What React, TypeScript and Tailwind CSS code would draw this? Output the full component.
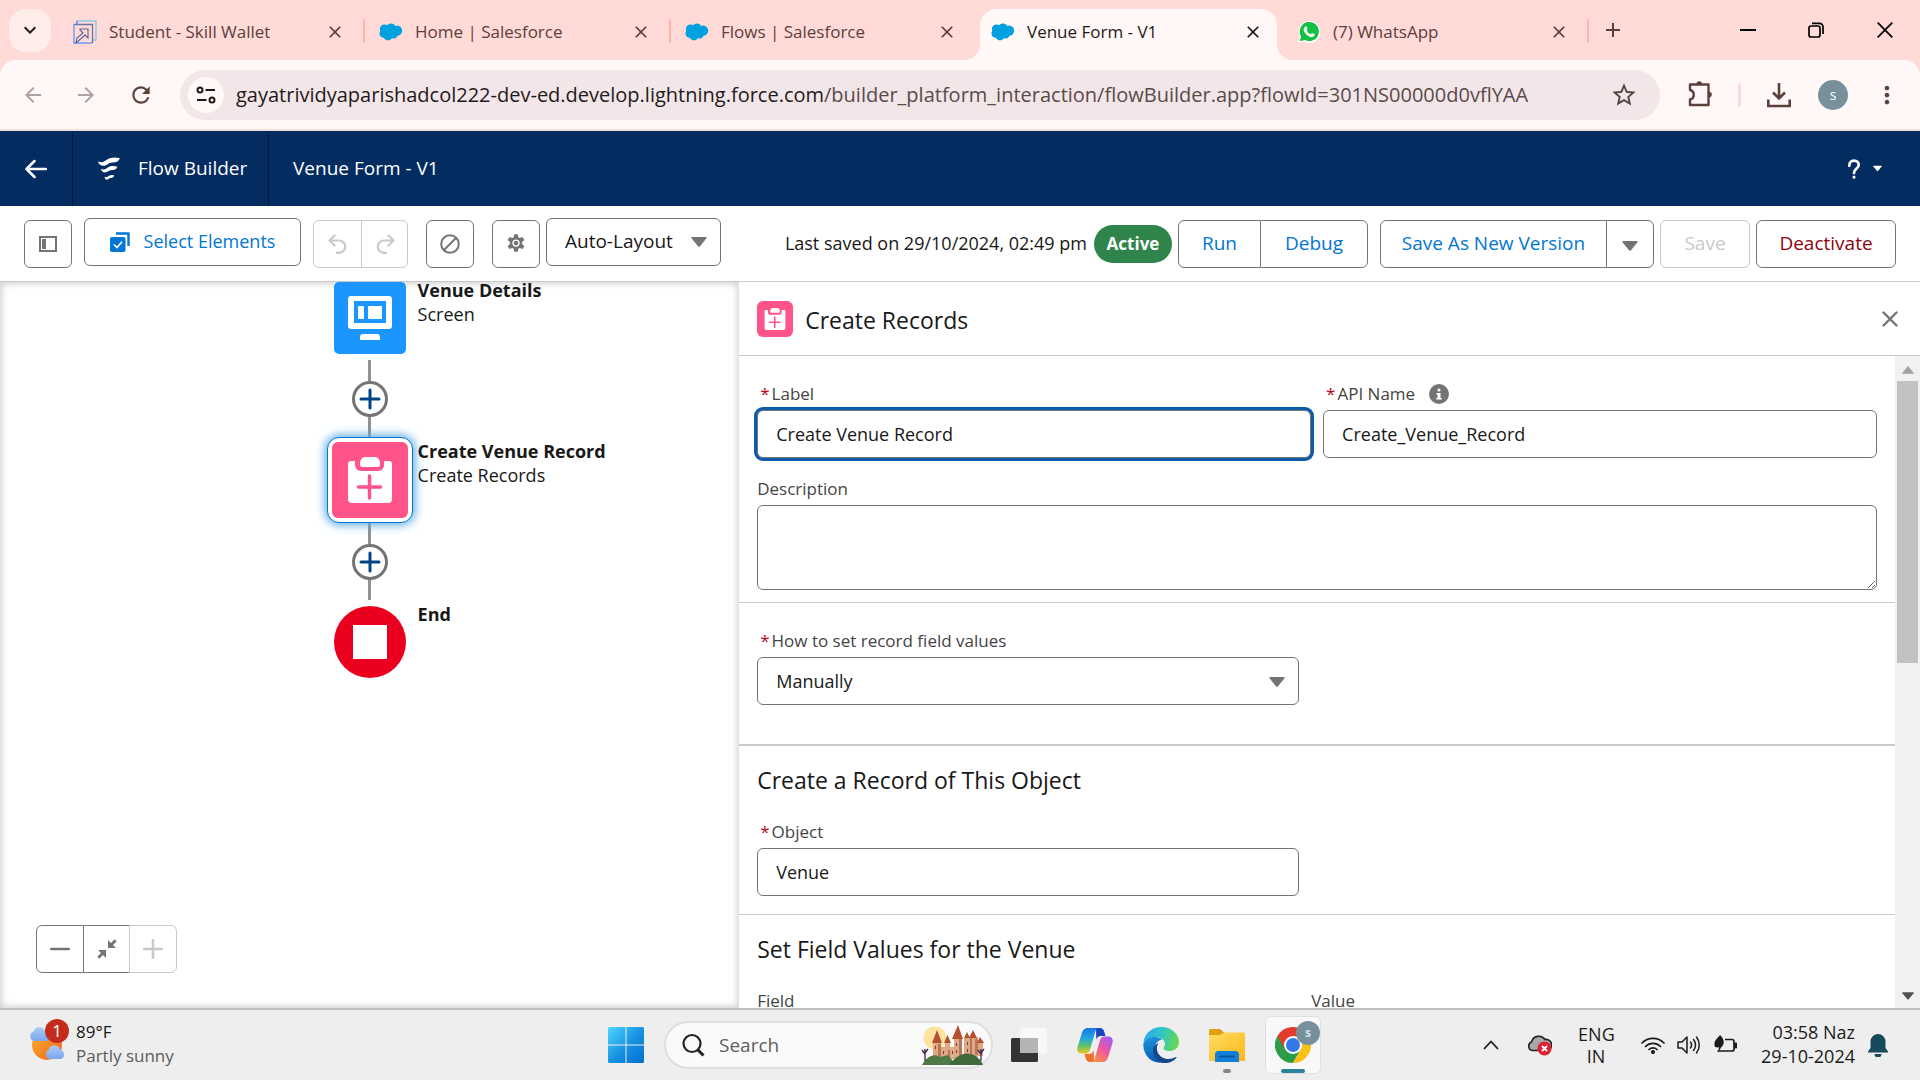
import React from "react";
import type { ReactNode } from "react";
import {
  MdArrowBack,
  MdArrowForward,
  MdRefresh,
  MdStarOutline,
  MdMoreVert,
  MdClose,
  MdAdd,
  MdKeyboardArrowDown,
} from "react-icons/md";

const iconButton =
  "flex size-12 items-center justify-center rounded-md border border-[#747474] bg-white text-[#747474]";
const textButton =
  "flex h-12 items-center justify-center border border-[#747474] bg-white text-[19px] text-[#0176d3]";
const fieldBox =
  "h-12 w-full rounded-md border border-[#747474] bg-white px-[18px] text-[18px] text-[#181818] outline-none";

function SalesforceCloud() {
  return (
    <svg viewBox="0 0 24 18" className="h-[18px] w-6" fill="#00a1e0">
      <circle cx="5.5" cy="6" r="4.6" />
      <circle cx="12" cy="5" r="4.6" />
      <circle cx="18" cy="7.6" r="5.2" />
      <circle cx="4.8" cy="10.4" r="4.3" />
      <circle cx="9" cy="12.8" r="4.6" />
      <circle cx="14.5" cy="11.4" r="4" />
    </svg>
  );
}

function SkillWalletIcon() {
  return (
    <svg viewBox="0 0 24 24" className="size-6" fill="none">
      <path d="M4 4V1h19v19h-3" stroke="#8bc8e8" strokeWidth="1.4" />
      <path d="M4 1v3" stroke="#6c8cf0" strokeWidth="1.4" />
      <path d="M1 4.5h18.5V23" stroke="#6a74a8" strokeWidth="1.3" />
      <path d="M1 4v19h18" stroke="#6c9cf0" strokeWidth="1.4" />
      <path d="M7 9h8v9l-3-3-9 8 1-5 6-5-3-3z" stroke="#5a6498" strokeWidth="1.1" />
    </svg>
  );
}

function WhatsAppIcon() {
  return (
    <svg viewBox="0 0 24 24" className="size-6">
      <path d="M1 23l1.6-6A11 11 0 1 1 7 21.6z" fill="#fff" />
      <path d="M2.8 21.3l1.3-4.8a9.6 9.6 0 1 1 3.7 3.5z" fill="#12c143" />
      <path
        d="M8.2 6.4c.5-.4 1.1-.3 1.4.3l.8 1.8c.1.4 0 .7-.8 1.7.8 1.9 2.3 3.3 4.2 4.1.9-1 1.2-1.3 1.7-1.1l1.900.9c.5.3.4 1-.1 1.7-1 1.3-2.4 1.7-4.3 1-3-1-5.1-3.2-6.1-5.8-.5-1.900 0-3.5 1.3-4.6z"
        fill="#fff"
      />
    </svg>
  );
}

function CaretDown({ className }: { className: string }) {
  return (
    <svg viewBox="0 0 16 10" className={className} fill="currentColor">
      <path d="M1.2 0h13.600c.9 0 1.2.7.7 1.3L8.8 9.4c-.4.6-1.2.6-1.6 0L.5 1.3C0 .7.3 0 1.2 0z" />
    </svg>
  );
}

function Tab({
  icon,
  title,
  active = false,
  divider = true,
}: {
  icon: ReactNode;
  title: string;
  active?: boolean;
  divider?: boolean;
}) {
  return (
    <div
      className={
        active
          ? "relative flex h-[51px] min-w-0 max-w-[306px] flex-1 items-center self-end pb-1.5 text-[#1f1a19]"
          : "relative flex h-[51px] min-w-0 max-w-[306px] flex-1 items-center self-end pb-1.5 text-[#5d403c]"
      }
    >
      {active && (
        <span className="absolute inset-y-0 left-[3px] right-1.5 rounded-t-2xl bg-[#fff8f6]">
          <span className="absolute -left-4 bottom-0 size-4 bg-[radial-gradient(circle_at_0_0,#ffdad6_16px,#fff8f6_16px)]" />
          <span className="absolute -right-4 bottom-0 size-4 bg-[radial-gradient(circle_at_100%_0,#ffdad6_16px,#fff8f6_16px)]" />
        </span>
      )}
      <button className="relative flex min-w-0 flex-1 items-center gap-3 pl-3.5 text-left">
        {icon}
        <span className="truncate text-[17px]">{title}</span>
      </button>
      <button aria-label={"Close " + title} className="relative mr-5 shrink-0">
        <MdClose className="size-5" />
      </button>
      {divider && <span className="absolute right-0 top-2.5 h-6 w-0.5 rounded bg-[#ffb4ab]" />}
    </div>
  );
}

function TabStrip() {
  return (
    <div className="flex h-[60px] items-center bg-[#ffdad6] pl-[9px]">
      <button
        aria-label="Search tabs"
        className="mr-2 flex h-[43px] w-[42px] shrink-0 items-center justify-center rounded-2xl bg-[#ffedea] text-[#1f1a19]"
      >
        <MdKeyboardArrowDown className="size-6" />
      </button>
      <div className="flex min-w-0 flex-1 self-stretch">
        <Tab icon={<SkillWalletIcon />} title="Student - Skill Wallet" />
        <Tab icon={<SalesforceCloud />} title="Home | Salesforce" />
        <Tab icon={<SalesforceCloud />} title="Flows | Salesforce" divider={false} />
        <Tab icon={<SalesforceCloud />} title="Venue Form - V1" active divider={false} />
        <Tab icon={<WhatsAppIcon />} title="(7) WhatsApp" />
        <button aria-label="New tab" className="ml-3 shrink-0 text-[#5d403c]">
          <MdAdd className="size-6" />
        </button>
      </div>
      <div className="flex shrink-0 text-black">
        <button aria-label="Minimise" className="flex w-[68px] justify-center">
          <svg viewBox="0 0 16 16" className="size-4" stroke="currentColor" strokeWidth="2">
            <path d="M0 8h16" />
          </svg>
        </button>
        <button aria-label="Restore" className="flex w-[68px] justify-center">
          <svg viewBox="0 0 16 16" className="size-4" fill="none" stroke="currentColor" strokeWidth="1.7">
            <rect x="1" y="4" width="11" height="11" rx="2" />
            <path d="M4 1.3h7.500a3.500 3.500 0 0 1 3.500 3.500V12" />
          </svg>
        </button>
        <button aria-label="Close window" className="flex w-[70px] justify-center">
          <svg viewBox="0 0 16 16" className="size-4" stroke="currentColor" strokeWidth="1.8">
            <path d="M.7.7l14.600 14.600M15.300.7L.7 15.300" />
          </svg>
        </button>
      </div>
    </div>
  );
}

function AddressBar() {
  return (
    <div className="bg-[#ffdad6]">
      <div className="flex h-[71px] items-center rounded-t-2xl border-b-2 border-[#f6dedb] bg-[#fff8f6] text-[#5d403c]">
        <button aria-label="Back" className="ml-[21px] text-[#b3a19f]">
          <MdArrowBack className="size-6" />
        </button>
        <button aria-label="Forward" className="ml-[29px] text-[#b3a19f]">
          <MdArrowForward className="size-6" />
        </button>
        <button aria-label="Reload" className="ml-[30px]">
          <MdRefresh className="size-[26px]" />
        </button>
        <div className="ml-[26px] flex h-[50px] min-w-0 flex-1 items-center rounded-full bg-[#f3e6e8] pl-2 pr-[22px]">
          <button
            aria-label="View site information"
            className="flex size-9 shrink-0 items-center justify-center rounded-full bg-[#fff8f6] text-[#1f1a19]"
          >
            <svg viewBox="0 0 20 20" className="size-5" fill="none" stroke="currentColor" strokeWidth="2">
              <circle cx="4" cy="5" r="2.5" />
              <path d="M9.5 5H19M1 15h9.5" />
              <circle cx="16" cy="15" r="2.5" />
            </svg>
          </button>
          <div className="ml-3 min-w-0 flex-1 truncate text-[20px] text-[#5a4a4b]">
            <span className="text-[#1f1a1b]">gayatrividyaparishadcol222-dev-ed.develop.lightning.force.com</span>
            /builder_platform_interaction/flowBuilder.app?flowId=301NS00000d0vflYAA
          </div>
          <button aria-label="Bookmark this tab" className="text-[#524344]">
            <MdStarOutline className="size-7" />
          </button>
        </div>
        <button aria-label="Extensions" className="mb-1 ml-[26px]">
          <svg viewBox="0 0 28 28" className="size-7" fill="none" stroke="currentColor" strokeWidth="2.4" strokeLinejoin="round">
            <path d="M4 5.500h18.500V26H4v-5.500c5-1 5-8.500 0-9.500z" />
            <path d="M10.500 5a2.800 2.800 0 0 1 5.600 0zM23 12.800a2.800 2.800 0 0 1 0 5.600z" fill="currentColor" stroke="none" />
          </svg>
        </button>
        <span className="ml-6 h-6 w-[3px] rounded bg-[#ffdad6]" />
        <button aria-label="Downloads" className="ml-[25px]">
          <svg viewBox="0 0 26 26" className="size-[26px]" fill="none" stroke="currentColor" strokeWidth="2.6">
            <path d="M13 1v15M7 10.500l6 6 6-6M2.300 17.500V24h21.400v-6.500" />
          </svg>
        </button>
        <button
          aria-label="Profile"
          className="ml-[26px] flex size-[30px] items-center justify-center rounded-full bg-[#78909c] text-[14px] text-white"
        >
          s
        </button>
        <button aria-label="Menu" className="ml-[25px] mr-[19px]">
          <MdMoreVert className="size-7" />
        </button>
      </div>
    </div>
  );
}

function AppHeader() {
  return (
    <header className="flex h-[75px] items-stretch bg-[#032d60] text-[19px] text-white">
      <button aria-label="Back to flows" className="flex w-[73px] items-center justify-center border-r border-[#021a3a]">
        <svg viewBox="0 0 22 20" className="h-5 w-[22px]" fill="none" stroke="currentColor" strokeWidth="2.5" strokeLinecap="round" strokeLinejoin="round">
          <path d="M1.500 10H21M9.500 2l-8 8 8 8" />
        </svg>
      </button>
      <div className="flex w-[196px] items-center border-r border-[#021a3a] pl-6">
        <svg viewBox="0 0 24 24" className="size-6" fill="currentColor">
          <path d="M1 4.500c3.500 1.600 6 .3 8.500-1.500C13.500.2 18 .2 23 1.200c-1.500 3.300-4 4.300-7.500 4.300-4 0-5.500 3.300-9 3.300C3.500 8.800 1.500 7 1 4.500z" />
          <path d="M4 11.800c2.500 1.200 4.500.4 6.300-1C13 8.800 16.500 8.800 20.500 9.700c-1.200 2.600-3.200 3.400-5.800 3.400-3 0-4 2.500-6.700 2.500-2.300 0-3.600-1.500-4-3.800z" />
          <path d="M7.500 19.800c1.700.9 3 .3 4.200-.7 1.600-1.200 3.300-1.200 5.600-.7-.8 2-2 2.700-3.700 2.700-1.600 0-2.100 1.700-3.700 1.700-1.300 0-2.200-1.200-2.400-3z" />
        </svg>
        <span className="ml-[17px]">Flow Builder</span>
      </div>
      <h1 className="flex flex-1 items-center pl-6">Venue Form - V1</h1>
      <button aria-label="Help" className="flex items-center gap-3 pr-[38px]">
        <svg viewBox="0 0 14 22" className="h-5 w-3.5" fill="none" stroke="currentColor" strokeWidth="3">
          <path d="M1.800 7.500C1.800 3.500 4 1.800 7 1.800s5.200 2 5.200 4.700C12.200 10.500 7 10.500 7 15.500" strokeLinecap="round" />
          <path d="M7 18.500v3" />
        </svg>
        <CaretDown className="h-[7px] w-[9px]" />
      </button>
    </header>
  );
}

function FlowToolbar() {
  return (
    <div className="flex h-[76px] shrink-0 items-center border-b border-[#c9c9c9] bg-white px-6">
      <button aria-label="Toggle toolbox" className={iconButton}>
        <svg viewBox="0 0 18 16" className="h-4 w-[18px]" fill="none" stroke="currentColor" strokeWidth="2">
          <rect x="1" y="1" width="16" height="14" />
          <path d="M3 3h4v10H3z" fill="currentColor" stroke="none" />
        </svg>
      </button>
      <button className="mb-1 ml-3 flex h-12 w-[217px] items-center justify-center gap-3.5 rounded-md border border-[#747474] text-[18px] text-[#0176d3]">
        <svg viewBox="0 0 20 20" className="size-5" fill="none">
          <path d="M6 1.500h12.500V14" stroke="#0176d3" strokeWidth="2.4" strokeLinejoin="round" />
          <rect x="0" y="5" width="15.500" height="15" rx="2" fill="#0176d3" />
          <path d="M4 12.500l3 3 5-5.800" stroke="#fff" strokeWidth="1.7" />
        </svg>
        Select Elements
      </button>
      <div className="ml-3 flex h-12 rounded-md border border-[#c9c9c9] text-[#c9c9c9]">
        <button aria-label="Undo" disabled className="flex w-12 items-center justify-center border-r border-[#c9c9c9]">
          <svg viewBox="0 0 20 20" className="size-5" fill="none" stroke="currentColor" strokeWidth="2.2" strokeLinecap="round">
            <path d="M6.500 1.500l-5 5 5 5M2 6.500h9a6.200 6.200 0 0 1 0 12.400H9" />
          </svg>
        </button>
        <button aria-label="Redo" disabled className="flex w-[45px] items-center justify-center">
          <svg viewBox="0 0 20 20" className="size-5" fill="none" stroke="currentColor" strokeWidth="2.2" strokeLinecap="round">
            <path d="M13.500 1.500l5 5-5 5M18 6.500H9a6.200 6.200 0 0 0 0 12.400h2" />
          </svg>
        </button>
      </div>
      <button aria-label="Show errors" className={iconButton + " ml-[18px]"}>
        <svg viewBox="0 0 20 20" className="size-5" fill="none" stroke="currentColor" strokeWidth="2">
          <circle cx="10" cy="10" r="8.8" />
          <path d="M16 4L4 16" />
        </svg>
      </button>
      <button aria-label="View properties" className={iconButton + " ml-[18px]"}>
        <svg viewBox="0 0 20 20" className="size-5" fill="currentColor">
          <path
            fillRule="evenodd"
            d="M8.2.3h3.600l.6 3 1.200.7 2.900-1 1.800 3.100-2.300 2v1.800l2.300 2-1.800 3.100-2.900-1-1.200.7-.6 3H8.200l-.6-3-1.200-.7-2.900 1-1.800-3.100 2.300-2V8.100l-2.300-2L3.500 3l2.900 1 1.200-.7zM10 5.400a3.700 3.700 0 1 0 0 7.400 3.700 3.700 0 0 0 0-7.400z"
          />
          <circle cx="10" cy="9.100" r="2.300" />
        </svg>
      </button>
      <div className="relative mb-1 ml-1.5 w-[175px]">
        <select
          aria-label="Layout mode"
          className="h-12 w-full appearance-none rounded-md border border-[#747474] bg-white pl-[18px] text-[19px] text-[#181818]"
        >
          <option>Auto-Layout</option>
        </select>
        <CaretDown className="pointer-events-none absolute right-3.5 top-[19px] h-2.5 w-4 text-[#747474]" />
      </div>
      <div className="ml-auto flex items-center text-[19px] text-[#181818]">
        <span className="whitespace-nowrap text-[18px]">Last saved on 29/10/2024, 02:49 pm</span>
        <span className="ml-[7px] flex h-[38px] w-[78px] items-center justify-center rounded-full bg-[#2e844a] text-[17px] font-bold text-white">
          Active
        </span>
        <button className={textButton + " ml-1.5 w-[83px] rounded-l-md"}>Run</button>
        <button className={textButton + " -ml-px w-[108px] rounded-r-md"}>Debug</button>
        <button className={textButton + " ml-3 w-[227px] rounded-l-md"}>Save As New Version</button>
        <button aria-label="More save options" className={textButton + " -ml-px w-12 rounded-r-md"}>
          <CaretDown className="mt-1 h-2.5 w-4 text-[#747474]" />
        </button>
        <button
          disabled
          className="ml-1.5 flex h-12 w-[90px] items-center justify-center rounded-md border border-[#c9c9c9] text-[#c9c9c9]"
        >
          Save
        </button>
        <button className="ml-1.5 flex h-12 w-[140px] items-center justify-center rounded-md border border-[#747474] text-[#8e030f]">
          Deactivate
        </button>
      </div>
    </div>
  );
}

function ClipboardPlus({ className }: { className: string }) {
  return (
    <svg viewBox="0 0 76 76" className={className}>
      <rect width="76" height="76" fill="#ff538a" />
      <path d="M19 19h38a3 3 0 0 1 3 3v35a4 4 0 0 1-4 4H20a4 4 0 0 1-4-4V22a3 3 0 0 1 3-3z" fill="#fff" />
      <path d="M23 15h29v8a6 6 0 0 1-6 6H29a6 6 0 0 1-6-6z" fill="#ff538a" />
      <path d="M33 15h10c3 0 5 3 5 6v1.500a2.500 2.500 0 0 1-2.500 2.500h-15A2.500 2.500 0 0 1 28 22.500V21c0-3 2-6 5-6z" fill="#fff" />
      <path d="M37.500 34v22M26.500 45h22" stroke="#ff538a" strokeWidth="3.4" strokeLinecap="round" />
    </svg>
  );
}

function Connector() {
  return (
    <div className="flex flex-col items-center">
      <span className="h-[21px] w-[3px] bg-[#919191]" />
      <button
        aria-label="Add element"
        className="flex size-9 items-center justify-center rounded-full border-3 border-[#747474] bg-white"
      >
        <svg viewBox="0 0 22 22" className="size-[22px]" stroke="#014486" strokeWidth="3" strokeLinecap="round">
          <path d="M11 2v18M2 11h18" />
        </svg>
      </button>
      <span className="h-5 w-[3px] bg-[#919191]" />
    </div>
  );
}

function FlowCanvas() {
  return (
    <section
      aria-label="Flow canvas"
      className="relative w-[38.5%] shrink-0 overflow-hidden bg-white shadow-[inset_0_0_6px_2px_rgba(0,0,0,0.18)]"
    >
      <div className="flex flex-col items-center">
        <div className="relative pb-1.5">
          <svg viewBox="0 0 72 72" className="size-[72px]">
            <rect width="72" height="72" rx="5" fill="#1b96ff" />
            <path
              fillRule="evenodd"
              d="M17 14h38a3 3 0 0 1 3 3v27a3 3 0 0 1-3 3H17a3 3 0 0 1-3-3V17a3 3 0 0 1 3-3zm3 5v22h32V19z"
              fill="#fff"
            />
            <rect x="24" y="24" width="6" height="13" rx="1" fill="#fff" />
            <rect x="34" y="24" width="14" height="13" rx="1" fill="#fff" />
            <path d="M29 52h14a3 3 0 0 1 3 3v3H26v-3a3 3 0 0 1 3-3z" fill="#fff" />
          </svg>
          <div className="absolute left-full top-0 ml-3 whitespace-nowrap text-[18px] leading-6 text-[#181818]">
            <div className="-mt-1 font-bold">Venue Details</div>
            <div>Screen</div>
          </div>
        </div>
        <Connector />
        <div className="relative">
          <div className="rounded-xl border border-[#0176d3] bg-white p-1 shadow-[0_0_10px_2px_#5aabea]">
            <ClipboardPlus className="size-[76px] rounded-md" />
          </div>
          <div className="absolute left-full top-0 ml-[5px] whitespace-nowrap text-[18px] leading-6 text-[#181818]">
            <div className="mt-0.5 font-bold">Create Venue Record</div>
            <div>Create Records</div>
          </div>
        </div>
        <Connector />
        <div className="relative mt-1.5">
          <div className="flex size-[72px] items-center justify-center rounded-full bg-[#ea001e]">
            <span className="size-[34px] bg-white" />
          </div>
          <div className="absolute left-full top-0 ml-3 whitespace-nowrap text-[18px] leading-6 text-[#181818]">
            <div className="-mt-1 font-bold">End</div>
          </div>
        </div>
      </div>
      <div className="absolute bottom-[35px] left-9 flex h-12">
        <button aria-label="Zoom out" className="flex w-12 items-center justify-center rounded-l-md border border-[#747474] text-[#747474]">
          <svg viewBox="0 0 20 20" className="size-5" stroke="currentColor" strokeWidth="2.6" strokeLinecap="round">
            <path d="M1.300 10h17.400" />
          </svg>
        </button>
        <button aria-label="Zoom to fit" className="flex w-[45px] items-center justify-center border-y border-[#747474] text-[#747474]">
          <svg viewBox="0 0 20 20" className="size-5" fill="currentColor">
            <path d="M11 1v8h8l-3-3 3.700-3.700-2-2L14 4z" />
            <path d="M9 19v-8H1l3 3L.3 17.700l2 2L6 16z" />
          </svg>
        </button>
        <button aria-label="Zoom in" disabled className="flex w-12 items-center justify-center rounded-r-md border border-[#c9c9c9] text-[#c9c9c9]">
          <svg viewBox="0 0 20 20" className="size-5" stroke="currentColor" strokeWidth="2.6" strokeLinecap="round">
            <path d="M1.300 10h17.400M10 1.300v17.400" />
          </svg>
        </button>
      </div>
    </section>
  );
}

function FieldLabel({ htmlFor, required = false, children }: { htmlFor?: string; required?: boolean; children: ReactNode }) {
  return (
    <label htmlFor={htmlFor} className="flex h-6 items-center text-[17px] text-[#444444]">
      {required && (
        <abbr title="required" className="mr-0.5 pl-[3px] text-[#ba0517] no-underline">
          *
        </abbr>
      )}
      {children}
    </label>
  );
}

function PropertyPanel() {
  return (
    <section aria-label="Create Records" className="flex min-w-0 flex-1 flex-col bg-white">
      <div className="flex h-[74px] shrink-0 items-center border-b border-[#c9c9c9] pl-[18px] pr-[22px]">
        <ClipboardPlus className="size-9 rounded-md" />
        <h2 className="ml-3 mt-1 text-[23px] text-[#181818]">Create Records</h2>
        <button aria-label="Close panel" className="ml-auto text-[#747474]">
          <svg viewBox="0 0 16 16" className="size-4" stroke="currentColor" strokeWidth="2.4" strokeLinecap="round">
            <path d="M1.500 1.500l13 13M14.500 1.500l-13 13" />
          </svg>
        </button>
      </div>
      <div className="flex min-h-0 flex-1">
        <div className="min-w-0 flex-1 overflow-hidden">
          <div className="border-b border-[#c9c9c9] px-[18px] pb-3 pt-[26px]">
            <div className="grid grid-cols-2 gap-3">
              <div>
                <FieldLabel htmlFor="label" required>Label</FieldLabel>
                <input
                  id="label"
                  defaultValue="Create Venue Record"
                  className={fieldBox + " mt-1 shadow-[0_0_0_3px_#0b5cab]"}
                />
              </div>
              <div>
                <FieldLabel htmlFor="api-name" required>
                  API Name
                  <svg viewBox="0 0 20 20" className="ml-3.5 size-5">
                    <circle cx="10" cy="10" r="10" fill="#747474" />
                    <rect x="8.5" y="4.5" width="3" height="3" rx="1.5" fill="#fff" />
                    <path d="M7.500 9h4v5h1.200v1.500H7.300V14h1.200v-3.500h-1z" fill="#fff" />
                  </svg>
                </FieldLabel>
                <input id="api-name" defaultValue="Create_Venue_Record" className={fieldBox + " mt-1"} />
              </div>
            </div>
            <div className="mt-[19px]">
              <FieldLabel htmlFor="description">Description</FieldLabel>
              <textarea
                id="description"
                className="mt-1 block h-[85px] w-full resize rounded-md border border-[#747474] bg-white p-3 text-[18px]"
              />
            </div>
          </div>
          <div className="border-b-2 border-[#c9c9c9] px-[18px] pb-[39px] pt-[26px]">
            <FieldLabel htmlFor="set-values" required>How to set record field values</FieldLabel>
            <div className="relative mt-1 w-[542px] max-w-full">
              <select id="set-values" className={fieldBox + " appearance-none"}>
                <option>Manually</option>
              </select>
              <CaretDown className="pointer-events-none absolute right-3.5 top-5 h-2.5 w-4 text-[#747474]" />
            </div>
          </div>
          <div className="border-b border-[#c9c9c9] px-[18px] pb-[18px] pt-4">
            <h3 className="text-[23px] leading-9 text-[#181818]">Create a Record of This Object</h3>
            <div className="mt-[22px]">
              <FieldLabel htmlFor="object" required>Object</FieldLabel>
              <div className="mt-1 w-[542px] max-w-full">
                <input id="object" defaultValue="Venue" className={fieldBox} />
              </div>
            </div>
          </div>
          <div className="px-[18px] pt-4">
            <h3 className="text-[23px] leading-9 text-[#181818]">Set Field Values for the Venue</h3>
            <div className="mt-[22px] grid grid-cols-[554px_1fr]">
              <FieldLabel>Field</FieldLabel>
              <FieldLabel>Value</FieldLabel>
            </div>
          </div>
        </div>
        <div className="flex w-[25px] shrink-0 flex-col items-center bg-[#f1f1f1] pb-2 pt-2.5">
          <CaretDown className="h-2 w-3 rotate-180 text-[#a3a3a3]" />
          <span className="mt-[7px] h-[282px] w-[21px] bg-[#c1c1c1]" />
          <CaretDown className="mt-auto h-2 w-3 text-[#505050]" />
        </div>
      </div>
    </section>
  );
}

function CastleArt() {
  return (
    <svg viewBox="0 0 64 40" className="h-10 w-16">
      <circle cx="14" cy="13" r="11.5" fill="#ffe1a0" />
      <path d="M12 17h8v16h-8zM20 22h14v12H20zM33 13h8v20h-8zM43 12h14v20H43zM24 17h5v8h-5zM57 17h5v14h-5z" fill="#dfa987" />
      <path d="M17 19h3v14h-3zM38 14h3v18h-3zM49 13h2v18h-2zM27 25h2v8h-2zM54 14h3v16h-3z" fill="#b8765a" />
      <path d="M14 21h1v3h-1zM22 26h1v3h-1zM31 26h1v3h-1zM35 18h1v3h-1zM46 17h1v3h-1zM46 24h1v3h-1zM35 25h1v3h-1z" fill="#7a3a2c" />
      <path d="M11 18l5-13 5 13zM31 14l6-14 5 14zM23 18l3.500-8 3.500 8zM43 13l3-6 3 6zM48 13l4-8 4 8zM56 18l3-6 4 6z" fill="#b4502f" />
      <path d="M1 40c5-9 12-12 18-8l8-2 8 10z" fill="#4f7a45" />
      <path d="M28 40c7-9 14-13 22-11 6 2 10 6 12 11z" fill="#3f6a3c" />
      <path d="M4 36V24M4 29l-3-4M4 28l3-4M60 36V24M60 29l-3-4M60 28l3-4" stroke="#3b2450" strokeWidth="1.3" />
    </svg>
  );
}

function WeatherIcon() {
  return (
    <svg viewBox="0 0 42 44" className="h-11 w-[42px]">
      <defs>
        <linearGradient id="sun" x1="0" y1="0" x2="1" y2="1">
          <stop offset="0" stopColor="#f9b22c" />
          <stop offset="1" stopColor="#f0641e" />
        </linearGradient>
        <linearGradient id="cloud" x1="0" y1="0" x2="0" y2="1">
          <stop offset="0" stopColor="#a9cdf8" />
          <stop offset="1" stopColor="#7ba4ee" />
        </linearGradient>
      </defs>
      <circle cx="18" cy="26" r="15" fill="url(#sun)" />
      <path d="M5 22a5 5 0 0 1-.5-9.500 6 6 0 0 1 11.500 0A5 5 0 0 1 19 22z" fill="url(#cloud)" />
      <path d="M20 40a5 5 0 0 1-.5-9 6 6 0 0 1 11.500-.5A5 5 0 0 1 32 40z" fill="url(#cloud)" />
      <circle cx="28" cy="12" r="12" fill="#c42b1c" />
    </svg>
  );
}

function StartIcon() {
  return (
    <svg viewBox="0 0 36 36" className="size-9">
      <defs>
        <linearGradient id="win" x1="0" y1="0" x2="1" y2="1">
          <stop offset="0" stopColor="#4fd6ff" />
          <stop offset=".55" stopColor="#1590e0" />
          <stop offset="1" stopColor="#0070d0" />
        </linearGradient>
      </defs>
      <path d="M1.500 0H17.500v17.500H0V1.500A1.500 1.500 0 0 1 1.500 0zM18.500 0h16A1.500 1.500 0 0 1 36 1.500v16H18.500zM0 18.500h17.500V36h-16A1.500 1.500 0 0 1 0 34.500zM18.500 18.500H36v16a1.500 1.500 0 0 1-1.500 1.500h-16z" fill="url(#win)" />
    </svg>
  );
}

function CopilotIcon() {
  return (
    <svg viewBox="0 0 36 36" className="size-9">
      <defs>
        <linearGradient id="cpl" x1="0" y1="0" x2="0" y2="1">
          <stop offset="0" stopColor="#1676e4" />
          <stop offset=".4" stopColor="#20a6e0" />
          <stop offset=".7" stopColor="#5cc26a" />
          <stop offset="1" stopColor="#f0c81e" />
        </linearGradient>
        <linearGradient id="cpr" x1="0.8" y1="0" x2="0.2" y2="1">
          <stop offset="0" stopColor="#a45cf0" />
          <stop offset=".5" stopColor="#f0589a" />
          <stop offset="1" stopColor="#fb9440" />
        </linearGradient>
      </defs>
      <path d="M19 1h4c2 0 3.500 1.400 4.200 3.500L28.500 9H24c-2.500 0-4 1.500-4.700 3.700z" fill="#1a44c0" />
      <path d="M10.500 1H22c-2 0-3.200 1.500-3.900 4l-5 17.500c-.8 2.500-2.300 4-4.800 4H5c-4 0-5.500-3-4.500-6.500L5 5.500C6 2.500 8 1 10.500 1z" fill="url(#cpl)" />
      <path d="M17 35h-4c-2 0-3.500-1.400-4.200-3.500L7.500 27H12c2.500 0 4-1.500 4.700-3.700z" fill="#f0702a" />
      <path d="M25.500 35H14c2 0 3.200-1.500 3.900-4l5-17.500c.8-2.500 2.300-4 4.800-4H31c4 0 5.500 3 4.500 6.500L31 30.500c-1 3-3 4.500-5.500 4.500z" fill="url(#cpr)" />
    </svg>
  );
}

function EdgeIcon() {
  return (
    <svg viewBox="0 0 36 36" className="size-9">
      <defs>
        <linearGradient id="edgeTop" x1="0" y1="0.3" x2="1" y2="0.5">
          <stop offset="0" stopColor="#2aa8e8" />
          <stop offset=".5" stopColor="#30c6c8" />
          <stop offset="1" stopColor="#6ad84c" />
        </linearGradient>
        <linearGradient id="edgeLow" x1="0" y1="0" x2="0.3" y2="1">
          <stop offset="0" stopColor="#1c98e0" />
          <stop offset="1" stopColor="#0c5cb4" />
        </linearGradient>
      </defs>
      <path d="M.5 15C2 6 9 0 18.500 0 29 0 36 7.500 36 15c0 5.500-4 9-9 9-4 0-6.500-1.300-6.500-2.800 0-1 1.500-1.700 1.500-4.200 0-4-4-7-9.500-7C7 10 3 12 .5 15z" fill="url(#edgeTop)" />
      <path d="M.2 17C1.500 12.500 6 10 12 10c3 0 5.500 1 7.300 2.500C15 13 11.500 17 11.500 22c0 7 6 12 12 13-9 3-23-1.500-23.300-18z" fill="url(#edgeLow)" />
      <path d="M15.500 16c-4.500 7 1 16 10 16 3 0 5-.7 7.300-2 .5-.3 1 .2.700.7C30.500 34.500 26 36 22 36c-7 0-12-6-12-13 0-3 2-5.600 5.500-7z" fill="#14488c" />
    </svg>
  );
}

function ExplorerIcon() {
  return (
    <svg viewBox="0 0 36 36" className="size-9">
      <defs>
        <linearGradient id="folder" x1="0" y1="0" x2="1" y2="1">
          <stop offset="0" stopColor="#ffdc64" />
          <stop offset="1" stopColor="#fbb917" />
        </linearGradient>
      </defs>
      <path d="M0 3.500A1.500 1.500 0 0 1 1.500 2H11l4 3.500V12H0z" fill="#dfa010" />
      <path d="M0 8h11l4-2.500h20a1 1 0 0 1 1 1V34H0z" fill="url(#folder)" />
      <path d="M6 35V27.500A3.500 3.500 0 0 1 9.500 24h17a3.500 3.500 0 0 1 3.500 3.500V35z" fill="#1280d8" />
      <path d="M11 29.500h14" stroke="#0a569c" strokeWidth="1.8" strokeLinecap="round" />
    </svg>
  );
}

function ChromeIcon() {
  return (
    <svg viewBox="0 0 36 36" className="size-9">
      <path d="M2.400 9A18 18 0 0 0 18 36l7.800-13.500L18 18z" fill="#2b9c47" />
      <path d="M18 9h15.600A18 18 0 0 1 18 36l7.800-13.500z" fill="#fbc116" />
      <path d="M2.400 9A18 18 0 0 1 33.600 9H18l-7.800 13.500z" fill="#e33b2e" />
      <circle cx="18" cy="18" r="9" fill="#fff" />
      <circle cx="18" cy="18" r="7" fill="#3478e8" />
    </svg>
  );
}

function Taskbar() {
  return (
    <footer className="relative flex h-[72px] shrink-0 items-center justify-between border-t-2 border-[#bdbdbd] bg-[#eeeeee] text-[17px] text-[#1b1b1b]">
      <button className="ml-[29px] flex items-center text-left">
        <span className="relative -mt-2">
          <WeatherIcon />
          <span className="absolute left-4 top-0 w-6 text-center leading-6 text-white">1</span>
        </span>
        <span className="mb-0.5 ml-[5px] leading-6">
          <span className="block">89°F</span>
          <span className="block text-[#5c5c5c]">Partly sunny</span>
        </span>
      </button>
      <div className="absolute left-1/2 flex h-full -translate-x-[352px] items-center">
        <button aria-label="Start"><StartIcon /></button>
        <div className="ml-5 flex h-12 w-[329px] items-center rounded-full border-2 border-[#dedede] bg-[#fafafa] pl-[15px] pr-1.5">
          <svg viewBox="0 0 24 24" className="size-6 shrink-0" fill="none" stroke="#222" strokeWidth="2.2">
            <circle cx="11" cy="10.5" r="8.5" />
            <path d="M17 17l5.500 5.500" strokeWidth="3" />
          </svg>
          <input
            aria-label="Search"
            placeholder="Search"
            className="ml-3.5 min-w-0 flex-1 bg-transparent text-[19px] outline-none placeholder:text-[#5f5f5f]"
          />
          <CastleArt />
        </div>
        <button aria-label="Task view" className="ml-[18px]">
          <svg viewBox="0 0 36 36" className="size-9">
            <rect x="0" y="11" width="27" height="24" rx="1.5" fill="#333" />
            <rect x="9" y="1" width="27" height="25" rx="1.5" fill="#f8f8f8" />
            <rect x="9" y="11" width="18" height="15" fill="#b4b4b4" />
          </svg>
        </button>
        <button aria-label="Copilot" className="ml-[30px]"><CopilotIcon /></button>
        <button aria-label="Microsoft Edge" className="ml-[30px]"><EdgeIcon /></button>
        <button aria-label="File Explorer" className="relative ml-[30px]">
          <ExplorerIcon />
          <span className="absolute -bottom-2.5 left-3.5 h-1 w-2 rounded-full bg-[#858585]" />
        </button>
        <button
          aria-label="Google Chrome"
          className="relative ml-5 flex h-[58px] w-14 items-center justify-center rounded-md border border-[#e0e0e0] bg-[#f8f8f8]"
        >
          <ChromeIcon />
          <span className="absolute right-0 top-1 flex size-6 items-center justify-center rounded-full bg-[#78909c] text-[12px] font-bold text-[#d5e0e5]">
            s
          </span>
          <span className="absolute bottom-0 h-1 w-6 rounded-full bg-[#2a8598]" />
        </button>
      </div>
      <div className="flex items-center pr-8 text-[18px]">
        <button aria-label="Show hidden icons">
          <svg viewBox="0 0 16 10" className="h-2.5 w-4" fill="none" stroke="currentColor" strokeWidth="1.8">
            <path d="M1 9l7-7.500L15 9" />
          </svg>
        </button>
        <button aria-label="Cloud sync error" className="ml-7">
          <svg viewBox="0 0 25 22" className="h-[22px] w-[25px]">
            <path d="M5 16.500A4.500 4.500 0 0 1 4.500 8 7.500 7.500 0 0 1 18 5.500 5.500 5.500 0 0 1 20 16.500z" fill="#a8a8a8" stroke="#222" strokeWidth="1.6" />
            <circle cx="17.5" cy="14.5" r="7" fill="#dc2430" />
            <path d="M15 12l5 5M20 12l-5 5" stroke="#fff" strokeWidth="1.8" />
          </svg>
        </button>
        <button className="ml-[26px] w-9 text-center leading-[22px]">
          ENG
          <br />
          IN
        </button>
        <button aria-label="Network, volume and battery" className="ml-[27px] flex items-center gap-3">
          <svg viewBox="0 0 24 18" className="h-[18px] w-6" fill="none" stroke="currentColor" strokeWidth="1.7" strokeLinecap="round">
            <path d="M1 7a15.500 15.500 0 0 1 22 0M4.500 10.500a10.500 10.500 0 0 1 15 0M8 13.500a5.800 5.800 0 0 1 8 0" />
            <circle cx="12" cy="16" r="1.2" fill="currentColor" />
          </svg>
          <svg viewBox="0 0 24 20" className="h-5 w-6" fill="none" stroke="currentColor" strokeWidth="1.5" strokeLinecap="round" strokeLinejoin="round">
            <path d="M1 7h4l5-5v16l-5-5H1zM13.500 7a5 5 0 0 1 0 6M16.500 4.500a8.500 8.500 0 0 1 0 11M19.500 2a13 13 0 0 1 0 16" />
          </svg>
          <svg viewBox="0 0 24 20" className="h-5 w-6" fill="none" stroke="currentColor" strokeWidth="1.7">
            <path d="M12 4.500h7a2 2 0 0 1 2 2v7.500a2 2 0 0 1-2 2H4.500" />
            <path d="M22 8.500h1.500v4H22z" fill="currentColor" />
            <path d="M7 0c4 3.500 5.500 9 1 12.500L5 18l1-6c-1 .5-2 .5-4 0C0 6 4 4 7 0z" fill="currentColor" stroke="none" />
          </svg>
        </button>
        <button className="mb-0.5 ml-6 text-right leading-6">
          03:58 Naz
          <br />
          29-10-2024
        </button>
        <button aria-label="Notifications" className="ml-[13px]">
          <svg viewBox="0 0 20 23" className="h-[23px] w-5" fill="#174a5b">
            <path d="M10 0a7.500 7.500 0 0 1 7.500 7.500V14l2.500 3.500v1H0v-1L2.500 14V7.500A7.500 7.500 0 0 1 10 0zM6.500 20h7a3.500 3.500 0 0 1-7 0z" />
          </svg>
        </button>
      </div>
    </footer>
  );
}

export default function App() {
  return (
    <div className="flex h-screen w-full flex-col overflow-hidden bg-white font-['Open_Sans',sans-serif]">
      <TabStrip />
      <AddressBar />
      <AppHeader />
      <FlowToolbar />
      <main className="flex min-h-0 flex-1">
        <FlowCanvas />
        <PropertyPanel />
      </main>
      <Taskbar />
    </div>
  );
}
